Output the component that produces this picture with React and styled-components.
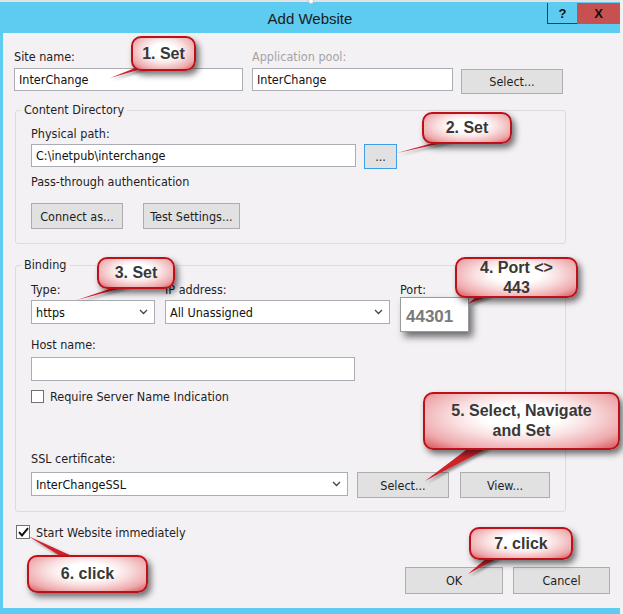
import React from "react";
import styled, { createGlobalStyle } from "styled-components";

const GlobalStyle = createGlobalStyle`
  html, body { margin: 0; padding: 0; background: #f2f2f2; }
  body { font-family: "Liberation Sans Narrow", "DejaVu Sans Condensed", "Liberation Sans", sans-serif; }
  * { box-sizing: border-box; }
`;

const UI_FONT = `"Liberation Sans Narrow", "DejaVu Sans Condensed", "Liberation Sans", sans-serif`;

const Window = styled.div`
  position: relative;
  width: 620px;
  height: 614px;
  display: flex;
  flex-direction: column;
  background: #f4f1f5;
  border-left: 3px solid #5ecbf0;
  border-bottom: 6px solid #5ecbf0;
  font-family: ${UI_FONT};
  font-size: 12.5px;
  color: #1e1e1e;
`;

const TopEdge = styled.div`
  position: relative;
  height: 2px;
  margin-left: -3px;
  background: #e2e2e2;
`;

const EdgeDot = styled.div`
  position: absolute;
  left: 308px;
  top: -2px;
  width: 6px;
  height: 6px;
  border-radius: 50%;
  background: #fff;
  border: 1px solid #c8c8c8;
`;

const TitleBar = styled.div`
  height: 31px;
  margin-left: -3px;
  background: #5ecbf0;
  display: grid;
  grid-template-columns: 1fr auto 1fr;
  align-items: center;
`;

const Title = styled.div`
  grid-column: 2;
  font-family: "Liberation Sans", sans-serif;
  font-size: 15px;
  color: #1b1b1b;
  padding-top: 2px;
`;

const CaptionButtons = styled.div`
  grid-column: 3;
  justify-self: end;
  align-self: start;
  margin-top: 1px;
  display: flex;
`;

const CaptionButton = styled.div`
  width: ${(p) => p.$w}px;
  height: 21px;
  display: flex;
  align-items: center;
  justify-content: center;
  font-family: "Liberation Sans", sans-serif;
  font-weight: bold;
  font-size: 13px;
  color: #111;
  background: ${(p) => (p.$close ? "#c75050" : "#5ecbf0")};
  border-left: ${(p) => (p.$close ? "none" : "1px solid #3a3a3a")};
  border-bottom: ${(p) => (p.$close ? "none" : "1px solid #3a3a3a")};
`;

const Client = styled.div`
  flex: 1;
  padding: 17px 10px 0 11px;
  display: flex;
  flex-direction: column;
`;

const Row = styled.div`
  display: flex;
  align-items: flex-start;
  margin-top: ${(p) => p.$mt || 0}px;
  justify-content: ${(p) => (p.$end ? "flex-end" : "flex-start")};
  gap: ${(p) => p.$gap || 0}px;
`;

const Field = styled.div`
  display: flex;
  flex-direction: column;
  width: ${(p) => p.$w}px;
  margin-right: ${(p) => p.$mr || 0}px;
`;

const Label = styled.div`
  line-height: 14px;
  height: 14px;
  white-space: nowrap;
  color: ${(p) => (p.$disabled ? "#a3a3a3" : "#1e1e1e")};
  margin-top: ${(p) => p.$mt || 0}px;
  margin-bottom: ${(p) => (p.$mb === undefined ? 3 : p.$mb)}px;
`;

const TextBox = styled.div`
  width: ${(p) => (p.$w ? `${p.$w}px` : "100%")};
  height: ${(p) => p.$h || 23}px;
  margin-right: ${(p) => p.$mr || 0}px;
  background: #fff;
  border: 1px solid #abadb3;
  padding: 0 4px;
  display: flex;
  align-items: center;
  white-space: nowrap;
  color: #111;
`;

const SelectBox = styled(TextBox)`
  justify-content: space-between;
  padding-right: 6px;
  height: 24px;
`;

const Chevron = () => (
  <svg width="9" height="6" viewBox="0 0 9 6">
    <polyline points="1,1 4.5,4.5 8,1" fill="none" stroke="#444" strokeWidth="1.3" />
  </svg>
);

const Button = styled.div`
  width: ${(p) => p.$w}px;
  height: ${(p) => p.$h || 26}px;
  margin-top: ${(p) => p.$mt || 0}px;
  margin-right: ${(p) => p.$mr || 0}px;
  background: #e1e1e1;
  border: 1px solid ${(p) => (p.$focus ? "#3c9ee8" : "#adadad")};
  display: flex;
  align-items: center;
  justify-content: center;
  white-space: nowrap;
  color: #1e1e1e;
  flex-shrink: 0;
`;

const Group = styled.fieldset`
  margin: ${(p) => p.$mt}px 0 0 1px;
  width: 551px;
  min-width: 0;
  border: 1px solid #dcdcdc;
  border-radius: 3px;
  padding: ${(p) => p.$pt}px 15px ${(p) => p.$pb}px 15px;
`;

const Legend = styled.legend`
  padding: 0 3px;
  margin-left: -10px;
  line-height: 14px;
  color: #1e1e1e;
`;

const PlainText = styled.div`
  line-height: 14px;
  margin-top: ${(p) => p.$mt || 0}px;
`;

const CheckRow = styled.label`
  display: flex;
  align-items: center;
  margin-top: ${(p) => p.$mt || 0}px;
  margin-left: ${(p) => p.$ml || 0}px;
  line-height: 13px;
`;

const Box = styled.span`
  width: ${(p) => p.$size}px;
  height: ${(p) => p.$size}px;
  border: 1px solid #707070;
  background: #fff;
  margin-right: 6px;
  display: flex;
  align-items: center;
  justify-content: center;
`;

const PortZoom = styled.div`
  position: relative;
  z-index: 2;
  width: 69px;
  height: 35px;
  background: #fff;
  border: 1px solid #9a9a9a;
  box-shadow: 4px 5px 7px rgba(0, 0, 0, 0.55);
  display: flex;
  align-items: center;
  padding: 4px 0 0 5px;
  font-family: "Liberation Sans", sans-serif;
  font-weight: bold;
  font-size: 17px;
  color: #7a7a7a;
`;

const Overlay = styled.svg`
  position: absolute;
  left: -3px;
  top: 0;
  width: 623px;
  height: 614px;
  pointer-events: none;
  z-index: 3;
`;

const Callout = styled.div`
  position: absolute;
  z-index: 4;
  left: ${(p) => p.$x - 3}px;
  top: ${(p) => p.$y}px;
  width: ${(p) => p.$w}px;
  height: ${(p) => p.$h}px;
  border: 2px solid #bd111a;
  border-radius: 10px;
  background: radial-gradient(
    ellipse at 50% 42%,
    #ffffff 0%,
    #ffffff 28%,
    #f9dfe0 50%,
    #eea9ac 78%,
    #d9545b 100%
  );
  box-shadow: 3px 4px 6px rgba(0, 0, 0, 0.55);
  display: flex;
  align-items: center;
  justify-content: center;
  text-align: center;
  font-family: "Liberation Sans", sans-serif;
  font-weight: bold;
  font-size: 16px;
  line-height: 20px;
  color: #383838;
`;

const pointers = [
  "140,66 152,66 110,78",
  "440,141 452,141 397,153",
  "118,286 130,286 77,300",
  "478,295 492,295 468,304",
  "470,447 490,447 425,481",
  "62,557 74,557 28,536",
  "488,557 500,557 468,574",
];

export default function App() {
  return (
    <>
      <GlobalStyle />
      <Window>
        <TopEdge>
          <EdgeDot />
        </TopEdge>
        <TitleBar>
          <Title>Add Website</Title>
          <CaptionButtons>
            <CaptionButton $w={30}>?</CaptionButton>
            <CaptionButton $w={43} $close>
              X
            </CaptionButton>
          </CaptionButtons>
        </TitleBar>

        <Client>
          <Row>
            <Field $w={229} $mr={9}>
              <Label $mb={4}>Site name:</Label>
              <TextBox>InterChange</TextBox>
            </Field>
            <Field $w={201} $mr={8}>
              <Label $mb={4} $disabled>
                Application pool:
              </Label>
              <TextBox>InterChange</TextBox>
            </Field>
            <Button $w={102} $h={25} $mt={19}>
              Select...
            </Button>
          </Row>

          <Group $mt={9} $pt={10} $pb={14}>
            <Legend>Content Directory</Legend>
            <Label>Physical path:</Label>
            <Row>
              <TextBox $w={325} $mr={8}>C:\inetpub\interchange</TextBox>
              <Button $w={33} $h={25} $focus>
                ...
              </Button>
            </Row>
            <PlainText $mt={6}>Pass-through authentication</PlainText>
            <Row $mt={14}>
              <Button $w={92} $mr={20}>
                Connect as...
              </Button>
              <Button $w={97}>Test Settings...</Button>
            </Row>
          </Group>

          <Group $mt={14} $pt={11} $pb={13}>
            <Legend>Binding</Legend>
            <Row>
              <Field $w={124} $mr={10}>
                <Label>Type:</Label>
                <SelectBox>
                  https
                  <Chevron />
                </SelectBox>
              </Field>
              <Field $w={225} $mr={10}>
                <Label>IP address:</Label>
                <SelectBox>
                  All Unassigned
                  <Chevron />
                </SelectBox>
              </Field>
              <Field $w={69}>
                <Label $mb={0}>Port:</Label>
                <PortZoom>44301</PortZoom>
              </Field>
            </Row>
            <Label $mt={6} $mb={5}>
              Host name:
            </Label>
            <TextBox $w={324} $h={24} />
            <CheckRow $mt={9}>
              <Box $size={13} />
              Require Server Name Indication
            </CheckRow>
            <Label $mt={49} $mb={6}>
              SSL certificate:
            </Label>
            <Row>
              <SelectBox $w={319} $mr={9}>
                InterChangeSSL
                <Chevron />
              </SelectBox>
              <Button $w={92} $mr={11}>
                Select...
              </Button>
              <Button $w={90}>View...</Button>
            </Row>
          </Group>

          <CheckRow $mt={13} $ml={2}>
            <Box $size={14}>
              <svg width="11" height="10" viewBox="0 0 11 10">
                <path d="M1 5.2 L4 8.5 L10 1.2" fill="none" stroke="#111" strokeWidth="2" />
              </svg>
            </Box>
            Start Website immediately
          </CheckRow>

          <Row $mt={28} $end $gap={10}>
            <Button $w={98} $h={27}>
              OK
            </Button>
            <Button $w={97} $h={27}>
              Cancel
            </Button>
          </Row>
        </Client>

        <Overlay viewBox="0 0 623 614">
          <defs>
            <filter id="ps" x="-50%" y="-50%" width="200%" height="200%">
              <feDropShadow dx="2" dy="2" stdDeviation="1.5" floodColor="#000" floodOpacity="0.45" />
            </filter>
          </defs>
          {pointers.map((pts) => (
            <polygon key={pts} points={pts} fill="#d0202a" filter="url(#ps)" />
          ))}
        </Overlay>

        <Callout $x={131} $y={36} $w={65} $h={35}>1. Set</Callout>
        <Callout $x={422} $y={112} $w={90} $h={32}>2. Set</Callout>
        <Callout $x={97} $y={257} $w={78} $h={32}>3. Set</Callout>
        <Callout $x={455} $y={257} $w={123} $h={41}>
          4. Port &lt;&gt;
          <br />
          443
        </Callout>
        <Callout $x={423} $y={392} $w={197} $h={58}>
          5. Select, Navigate
          <br />
          and Set
        </Callout>
        <Callout $x={27} $y={555} $w={121} $h={38}>6. click</Callout>
        <Callout $x={469} $y={527} $w={104} $h={33}>7. click</Callout>
      </Window>
    </>
  );
}
